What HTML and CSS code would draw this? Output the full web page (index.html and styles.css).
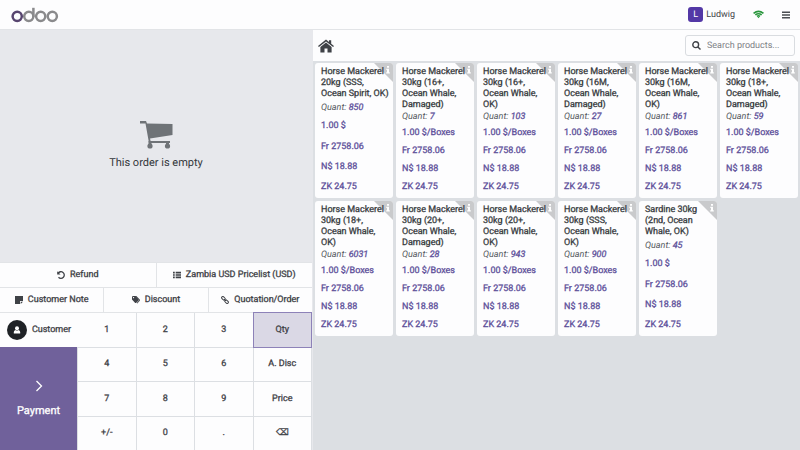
FILE: index.html
```html
<!DOCTYPE html>
<html lang="en">
<head>
<meta charset="utf-8">
<meta name="viewport" content="width=device-width, initial-scale=1">
<title>Odoo Point of Sale</title>
<link rel="stylesheet" href="styles.css">
</head>
<body>
<header class="topbar">
  <svg class="logo" viewBox="0 0 48 16" role="img" aria-label="odoo">
    <g fill="none" stroke="#8a8a8c" stroke-width="2.500">
      <circle cx="17.800" cy="9.300" r="4.600"/>
      <path d="M22.400 0.800v9"/>
      <circle cx="29.700" cy="9.300" r="4.600"/>
      <circle cx="41.300" cy="9.300" r="4.600"/>
      <circle cx="6.200" cy="9.300" r="4.600" stroke="#57456f"/>
    </g>
  </svg>
  <div class="status">
    <button class="user" type="button"><span class="avatar">L</span>Ludwig</button>
    <button class="plain" type="button" aria-label="Connected">
      <svg class="wifi" viewBox="0 0 12 9" fill="none" stroke="#28963c" stroke-width="1.700"><path d="M.6 3.200Q6-1.100 11.400 3.200M2.500 5Q6 2.300 9.500 5M4.300 6.600Q6 5.200 7.700 6.600"/><path d="M4.700 7h2.600L6 8.700z" fill="#28963c" stroke="none"/></svg>
    </button>
    <button class="plain" type="button" aria-label="Menu">
      <svg class="burger" viewBox="0 0 8 8" fill="#4a4d52"><path d="M0 .5h8v1.500H0zM0 3.300h8v1.500H0zM0 6h8v1.500H0z"/></svg>
    </button>
  </div>
</header>
<div class="pos">
  <section class="left">
    <div class="order">
      <svg class="cart" viewBox="0 0 33 28" fill="#6f7377"><path d="M0 0h6l1 2.500 25.500.5v11L10 17.500l.6 2.500H30v2H9L5.500 2.500H0z"/><circle cx="10" cy="25" r="2.600"/><circle cx="27.500" cy="25" r="2.600"/><path d="M8.500 20h3v4h-3zM26 21h3v3h-3z"/></svg>
      <p>This order is empty</p>
    </div>
    <div class="controls">
      <div class="control-row">
        <button type="button"><svg class="ico" viewBox="0 0 8 8"><path d="M1.200 2.200A3.300 3.300 0 1 1 1.500 6.200" fill="none" stroke="#3f4247" stroke-width="1.300"/><path d="M.2.200v3.300h3.300z"/></svg>Refund</button>
        <button type="button"><svg class="ico" viewBox="0 0 9 8"><path d="M0 .3h2v1.400H0zM3 .3h6v1.400H3zM0 2.300h2v1.400H0zM3 2.300h6v1.400H3zM0 4.300h2v1.400H0zM3 4.300h6v1.400H3zM0 6.300h2v1.400H0zM3 6.300h6v1.400H3z"/></svg>Zambia USD Pricelist (USD)</button>
      </div>
      <div class="control-row">
        <button type="button"><svg class="ico" viewBox="0 0 8 8"><path d="M0 0h8v5H5v3H0zM5.700 5.700H8L5.700 8z"/></svg>Customer Note</button>
        <button type="button"><svg class="ico" viewBox="0 0 8 8"><path fill-rule="evenodd" d="M0 .8L.8 0h2.700l3.300 3.400v.8L4 7h-.8L0 3.600zM1.500 1a.6.6 0 1 0 .1 0zM4.400.1L8 3.700v.8L5.300 7.500l-.6-.5 2.700-3L3.600.1z"/></svg>Discount</button>
        <button type="button"><svg class="ico" viewBox="0 0 8 8"><g fill="none" stroke="#3f4247"><rect x=".4" y="1.100" width="4" height="2.400" rx="1.200" transform="rotate(45 2.400 2.300)"/><rect x="3.600" y="4.500" width="4" height="2.400" rx="1.200" transform="rotate(45 5.600 5.700)"/><path d="M3 3l2 2"/></g></svg>Quotation/Order</button>
      </div>
    </div>
    <div class="pads">
      <div class="actionpad">
        <button class="customer" type="button"><span class="person"><svg viewBox="0 0 8 8" fill="#fff"><circle cx="4" cy="2.200" r="2"/><path d="M.8 7.500V6Q1 4.300 2.500 4q1.500 1 3 0Q7 4.300 7.200 6v1.500z"/></svg></span>Customer</button>
        <button class="payment" type="button"><svg viewBox="0 0 8 12" fill="none" stroke="#fff" stroke-width="1.300"><path d="M1.500 1l5 5-5 5"/></svg>Payment</button>
      </div>
      <div class="numpad">
        <button type="button">1</button><button type="button">2</button><button type="button">3</button><button class="selected" type="button">Qty</button>
        <button type="button">4</button><button type="button">5</button><button type="button">6</button><button type="button">A. Disc</button>
        <button type="button">7</button><button type="button">8</button><button type="button">9</button><button type="button">Price</button>
        <button type="button">+/-</button><button type="button">0</button><button type="button">.</button><button type="button">⌫</button>
      </div>
    </div>
  </section>
  <main class="right">
    <div class="searchbar">
      <button class="plain" type="button" aria-label="Home">
        <svg class="home" viewBox="0 0 16 13" fill="#3f4247"><path d="M8 0l3 2.500V.8h2.200v3.500L16 6.600l-.9 1L8 1.900.9 7.600l-.9-1z"/><path d="M8 3l5.600 4.500V13H9.500V9h-3v4H2.400V7.500z"/></svg>
      </button>
      <label class="search">
        <svg viewBox="0 0 9 9" fill="none" stroke="#3f4247" stroke-width="1.400"><circle cx="3.700" cy="3.700" r="2.900"/><path d="M5.900 5.900l2.600 2.600"/></svg>
        <input type="text" placeholder="Search products..." aria-label="Search products">
      </label>
    </div>
    <div class="products" id="products"></div>
  </main>
</div>
<script src="products.js"></script>
</body>
</html>
```
FILE: styles.css
```css
* { box-sizing: border-box; }

body {
  margin: 0;
  height: 100vh;
  display: flex;
  flex-direction: column;
  font-family: Roboto, "Liberation Sans", sans-serif;
  font-size: 9px;
  text-rendering: geometricPrecision;
  color: #3f4247;
  background: #fdfdfe;
}

button {
  margin: 0;
  padding: 0;
  border: 0;
  background: #fdfdfe;
  color: inherit;
  font: inherit;
  text-rendering: inherit;
  -webkit-text-stroke: 0.3px;
}

svg { display: block; }

.topbar {
  flex: none;
  height: 30px;
  padding: 0 10px 0 11px;
  display: flex;
  align-items: center;
  justify-content: space-between;
  border-bottom: 1px solid #e2e4e7;
}
.logo { width: 48px; height: 16px; }
.status { display: flex; align-items: center; gap: 18px; }
.user { display: flex; align-items: center; gap: 3px; -webkit-text-stroke: 0; }
.avatar {
  width: 15px;
  height: 15px;
  border-radius: 3px;
  background: #5338a6;
  color: #fff;
  line-height: 16px;
}
.wifi { width: 11px; height: 9px; }
.burger { width: 8px; height: 8px; }

.pos {
  flex: 1;
  min-height: 0;
  display: grid;
  grid-template-columns: 39fr 61fr;
}

.left { display: flex; flex-direction: column; min-width: 0; }
.order {
  flex: 1;
  display: flex;
  flex-direction: column;
  align-items: center;
  justify-content: center;
  gap: 6px;
  background: #e7e8ec;
  font-size: 11px;
  color: #34373b;
}
.order p { margin: 0; line-height: 16px; }
.cart { width: 33px; height: 28px; }

.controls {
  display: grid;
  gap: 1px;
  padding: 1px 0;
  background: #e2e4e7;
}
.control-row {
  display: grid;
  grid-auto-flow: column;
  grid-auto-columns: 1fr;
  gap: 1px;
}
.control-row button {
  height: 24px;
  display: flex;
  align-items: center;
  justify-content: center;
  gap: 5px;
  white-space: nowrap;
}
.ico { width: 8px; height: 8px; fill: #3f4247; }

.pads {
  display: grid;
  grid-template-columns: 1fr 3fr;
  height: 137px;
}
.actionpad { display: flex; flex-direction: column; }
.customer {
  height: 34px;
  display: flex;
  align-items: center;
  justify-content: center;
  gap: 5px;
}
.person {
  width: 20px;
  height: 20px;
  border-radius: 50%;
  background: #1f2226;
  display: grid;
  place-items: center;
}
.person svg { width: 8px; height: 8px; }
.payment {
  flex: 1;
  display: flex;
  flex-direction: column;
  align-items: center;
  justify-content: center;
  gap: 12px;
  border-right: 1px solid #dcdfe3;
  background: #70619b;
  color: #fff;
  font-size: 11px;
}
.payment svg { width: 8px; height: 12px; }
.numpad {
  display: grid;
  grid-template-columns: repeat(4, 1fr);
  grid-template-rows: repeat(4, 1fr);
  gap: 1px;
  padding-right: 1px;
  background: #dcdfe3;
}
.numpad .selected { background: #dad8e5; box-shadow: 0 0 0 1px #8d82b8; }

.right {
  display: flex;
  flex-direction: column;
  min-width: 0;
  background: #dcdfe3;
  border-left: 1px solid #e7e8ec;
}
.searchbar {
  flex: none;
  height: 31px;
  padding: 0 5px;
  display: flex;
  align-items: center;
  justify-content: space-between;
  background: #fdfdfe;
}
.plain { background: none; }
.home { width: 16px; height: 14px; }
.search {
  display: flex;
  align-items: center;
  gap: 6px;
  width: 110px;
  height: 21px;
  padding: 0 6px;
  border: 1px solid #d9dce0;
  border-radius: 3px;
}
.search svg { flex: none; width: 9px; height: 9px; }
.search input {
  flex: 1;
  min-width: 0;
  padding: 0;
  border: 0;
  outline: 0;
  background: none;
  color: inherit;
  font: inherit;
  text-rendering: inherit;
}
.search input::placeholder { color: #7d8186; }

.products {
  display: grid;
  grid-template-columns: repeat(6, 1fr);
  gap: 3px;
  padding: 2px;
}
.product {
  position: relative;
  display: flex;
  flex-direction: column;
  justify-content: space-between;
  padding: 4px 3px 2px 6px;
  border-radius: 3px;
  background: #fdfdfe;
  -webkit-text-stroke: 0.3px;
  overflow: hidden;
}
.product h2 {
  position: relative;
  z-index: 1;
  margin: 0;
  font: inherit;
  line-height: 11px;
  color: #3a3d42;
}
.product p { margin: 0; line-height: 18px; color: #5d509a; }
.product .quant { margin-bottom: 1px; line-height: 12px; color: #55585d; font-style: italic; -webkit-text-stroke: 0; }
.quant b { color: #5d509a; font-weight: 400; -webkit-text-stroke: 0.3px; }
.info {
  position: absolute;
  top: 0;
  right: 0;
  width: 19px;
  height: 19px;
  clip-path: polygon(0 0, 100% 0, 100% 100%);
  background: #c9cacc;
}
.info svg { width: 4px; height: 8px; margin: 3px 0 0 12px; fill: #fff; }
```
FILE: products.js
```js
const products = [
  ["Horse Mackerel 20kg (SSS, Ocean Spirit, OK)", 850, "1.00 $"],
  ["Horse Mackerel 30kg (16+, Ocean Whale, Damaged)", 7, "1.00 $/Boxes"],
  ["Horse Mackerel 30kg (16+, Ocean Whale, OK)", 103, "1.00 $/Boxes"],
  ["Horse Mackerel 30kg (16M, Ocean Whale, Damaged)", 27, "1.00 $/Boxes"],
  ["Horse Mackerel 30kg (16M, Ocean Whale, OK)", 861, "1.00 $/Boxes"],
  ["Horse Mackerel 30kg (18+, Ocean Whale, Damaged)", 59, "1.00 $/Boxes"],
  ["Horse Mackerel 30kg (18+, Ocean Whale, OK)", 6031, "1.00 $/Boxes"],
  ["Horse Mackerel 30kg (20+, Ocean Whale, Damaged)", 28, "1.00 $/Boxes"],
  ["Horse Mackerel 30kg (20+, Ocean Whale, OK)", 943, "1.00 $/Boxes"],
  ["Horse Mackerel 30kg (SSS, Ocean Whale, OK)", 900, "1.00 $/Boxes"],
  ["Sardine 30kg (2nd, Ocean Whale, OK)", 45, "1.00 $"]
];

document.getElementById("products").innerHTML = products.map(([name, quantity, price]) => `
  <article class="product">
    <h2>${name}</h2>
    <p class="quant">Quant: <b>${quantity}</b></p>
    <p>${price}</p>
    <p>Fr 2758.06</p>
    <p>N$ 18.88</p>
    <p>ZK 24.75</p>
    <span class="info"><svg viewBox="0 0 4 8"><path d="M1 0h2v1.700H1zM.3 2.700H3v3.600h.8v1.200H.2V6.300H1V3.900H.3z"/></svg></span>
  </article>`).join("");
```
